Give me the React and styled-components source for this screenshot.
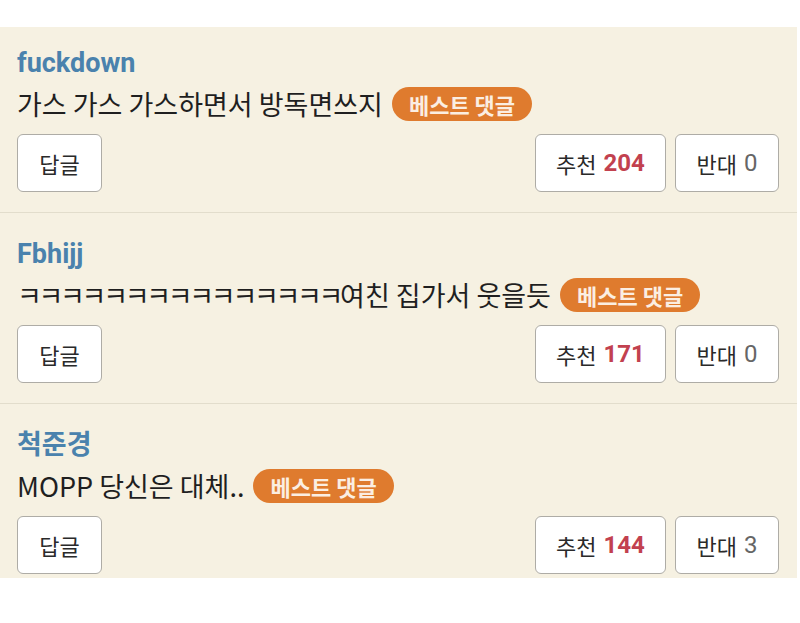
import React from "react";
import styled, { createGlobalStyle } from "styled-components";

const Global = createGlobalStyle`
  html, body { margin: 0; padding: 0; background: #ffffff; }
  body { font-family: Roboto, "Noto Sans CJK KR", sans-serif; }
`;

const Page = styled.div`
  width: 800px;
  height: 623px;
  padding-top: 27px;
  box-sizing: border-box;
  background: #ffffff;
`;

const List = styled.div`
  margin-right: 3px;
  background: #f6f1e2;
  display: flex;
  flex-direction: column;
`;

const Item = styled.div`
  padding: 23px 18px 20px 17px;
  border-bottom: 1px solid #e2ddcc;
  display: flex;
  flex-direction: column;
  &:first-child { padding-top: 18px; }
  &:last-child { border-bottom: none; padding-bottom: 4px; }
`;

const Author = styled.div`
  font-family: Roboto, "Noto Sans CJK KR", sans-serif;
  font-weight: 700;
  font-size: 27px;
  line-height: 36px;
  color: #4a82ad;
`;

const Body = styled.div`
  margin-top: 4px;
  display: flex;
  align-items: center;
  font-family: "Noto Sans CJK KR", sans-serif;
  font-size: 27px;
  line-height: 38px;
  color: #1f1f1f;
`;

const Jamo = styled.span`
  letter-spacing: -3.3px;
`;

const Badge = styled.span`
  display: inline-flex;
  align-items: center;
  justify-content: center;
  height: 34px;
  padding: 0 17px;
  margin-left: 9px;
  border-radius: 17px;
  background: #df7b2e;
  color: #fbeee2;
  font-family: "Noto Sans CJK KR", sans-serif;
  font-weight: 700;
  font-size: 22px;
  line-height: 34px;
`;

const Actions = styled.div`
  margin-top: 11px;
  display: flex;
  align-items: center;
  gap: 9px;
`;

const Spacer = styled.div`
  flex: 1;
`;

const Button = styled.button`
  height: 58px;
  width: ${(p) => p.$w}px;
  box-sizing: border-box;
  background: #ffffff;
  border: 1.5px solid #aeaca6;
  border-radius: 6px;
  display: flex;
  align-items: center;
  justify-content: center;
  gap: 7px;
  font-family: Roboto, "Noto Sans CJK KR", sans-serif;
  font-size: 22px;
  color: #2a2a2a;
  padding: 0;
`;

const Count = styled.span`
  font-family: Roboto, sans-serif;
  font-size: 24px;
  font-weight: ${(p) => (p.$up ? 700 : 400)};
  color: ${(p) => (p.$up ? "#c2414f" : "#666666")};
`;

const comments = [
  { author: "fuckdown", text: "가스 가스 가스하면서 방독면쓰지", up: 204, down: 0 },
  { author: "Fbhijj", jamo: "ㅋㅋㅋㅋㅋㅋㅋㅋㅋㅋㅋㅋㅋㅋㅋ", text: "여친 집가서 웃을듯", up: 171, down: 0 },
  { author: "척준경", text: "MOPP 당신은 대체..", up: 144, down: 3 },
];

export default function App() {
  return (
    <Page>
      <Global />
      <List>
        {comments.map((c) => (
          <Item key={c.author}>
            <Author>{c.author}</Author>
            <Body>
              <span>
                {c.jamo && <Jamo>{c.jamo}</Jamo>}
                {c.text}
              </span>
              <Badge>베스트 댓글</Badge>
            </Body>
            <Actions>
              <Button $w={85}>답글</Button>
              <Spacer />
              <Button $w={131}>
                추천 <Count $up>{c.up}</Count>
              </Button>
              <Button $w={104}>
                반대 <Count>{c.down}</Count>
              </Button>
            </Actions>
          </Item>
        ))}
      </List>
    </Page>
  );
}
